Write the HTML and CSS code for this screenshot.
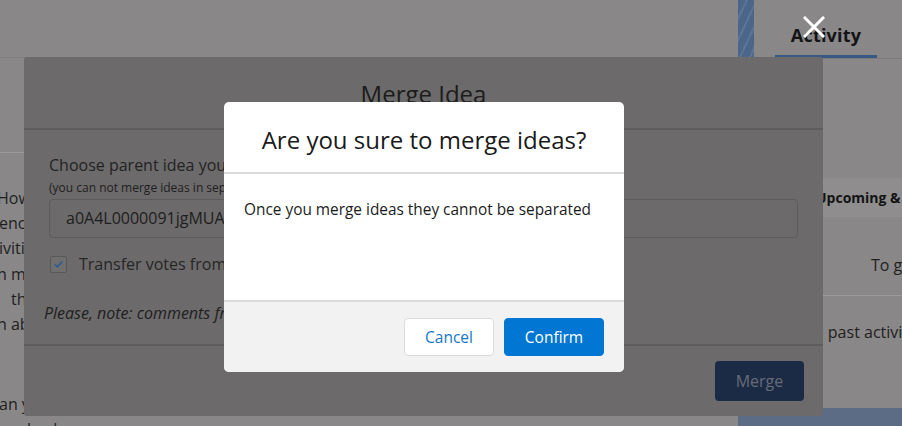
FILE: index.html
```html
<!DOCTYPE html>
<html>
<head>
<meta charset="utf-8">
<link rel="stylesheet" href="styles.css">
</head>
<body>
<div class="page">
  <div class="main">
    <div class="main-top"></div>
    <div class="main-sub"></div>
    <div class="main-text">
      <div class="ln">How to</div>
      <div class="ln s1">ences</div>
      <div class="ln s1">ivities</div>
      <div class="ln">n make</div>
      <div class="ln s2">the</div>
      <div class="ln">n about</div>
      <div class="ln gap s1">an you</div>
      <div class="ln s3">back</div>
    </div>
  </div>
  <div class="strip">
    <div class="strip-top"></div>
    <div class="strip-mid"></div>
    <div class="strip-foot"></div>
  </div>
  <aside class="side">
    <div class="tabs"><div class="tab">Activity</div></div>
    <div class="side-space"></div>
    <div class="side-band">Upcoming &amp; Overdue</div>
    <div class="side-row">To get started</div>
    <div class="side-row2">No past activity</div>
    <div class="side-fill"></div>
    <div class="side-foot"></div>
  </aside>
</div>

<svg class="close" width="22" height="22" viewBox="0 0 22 22">
  <path d="M2 2 L20 20 M20 2 L2 20" stroke="#ffffff" stroke-width="3" stroke-linecap="square" fill="none"/>
</svg>

<div class="merge">
  <div class="merge-head">Merge Idea</div>
  <div class="merge-body">
    <div class="m-label">Choose parent idea you want to merge into</div>
    <div class="m-hint">(you can not merge ideas in separate zones)</div>
    <div class="m-input">a0A4L0000091jgMUAQ</div>
    <div class="m-check">
      <span class="box"><svg width="16" height="16" viewBox="0 0 16 16"><path d="M4 8.3 L6.8 11 L12 5.3" stroke="#2a5c96" stroke-width="1.8" fill="none"/></svg></span>
      <span>Transfer votes from the child idea</span>
    </div>
    <div class="m-note">Please, note: comments from the child idea will be transferred</div>
  </div>
  <div class="merge-foot"><button class="btn-merge">Merge</button></div>
</div>

<div class="confirm">
  <div class="c-head">Are you sure to merge ideas?</div>
  <div class="c-body">Once you merge ideas they cannot be separated</div>
  <div class="c-foot">
    <button class="btn btn-cancel">Cancel</button>
    <button class="btn btn-confirm">Confirm</button>
  </div>
</div>
</body>
</html>
```

FILE: styles.css
```css
* { box-sizing: border-box; }
html, body {
  margin: 0;
  padding: 0;
  width: 902px;
  height: 426px;
  overflow: hidden;
  background: #898788;
  font-family: "Open Sans", "Noto Sans", sans-serif;
}
.page {
  display: flex;
  width: 902px;
  height: 426px;
}
.main {
  width: 738px;
  display: flex;
  flex-direction: column;
  overflow: hidden;
}
.main-top { height: 57px; flex-shrink: 0; }
.main-sub {
  height: 96px;
  flex-shrink: 0;
  border-top: 1px solid #7f7d7e;
  border-bottom: 1px solid #9b999a;
}
.main-text {
  flex-shrink: 0;
  padding-top: 33px;
  margin-left: -3px;
  font-size: 16px;
  line-height: 25.2px;
  color: #1f1f1f;
  white-space: nowrap;
}
.ln.s1 { padding-left: 2px; }
.ln.s2 { padding-left: 14px; }
.ln.s3 { padding-left: 30px; }
.ln.gap { margin-top: 55px; }
.strip {
  width: 16px;
  display: flex;
  flex-direction: column;
}
.strip-top {
  height: 57px;
  flex-shrink: 0;
  background: repeating-linear-gradient(115deg, #4b6688 0 7px, #5a7597 7px 9px);
}
.strip-mid { flex: 1; }
.strip-foot { height: 18px; flex-shrink: 0; background: #5c6c84; }
.side {
  width: 148px;
  display: flex;
  flex-direction: column;
  white-space: nowrap;
  overflow: hidden;
}
.tabs {
  height: 59px;
  flex-shrink: 0;
  border-bottom: 1px solid #7d7b7c;
  padding-left: 21px;
  display: flex;
  align-items: flex-end;
}
.tab {
  width: 102px;
  height: 58px;
  border-bottom: 3px solid #375984;
  font-weight: 700;
  font-size: 18px;
  color: #141414;
  text-align: center;
  padding-top: 23px;
  letter-spacing: 0.2px;
}
.side-space { height: 119px; flex-shrink: 0; }
.side-band {
  height: 39px;
  flex-shrink: 0;
  background: #8f8d8e;
  font-weight: 700;
  font-size: 14px;
  line-height: 39px;
  color: #141414;
  padding-left: 62px;
}
.side-row {
  height: 79px;
  flex-shrink: 0;
  border-bottom: 1px solid #9c9a9b;
  font-size: 16px;
  line-height: 20px;
  padding-top: 38px;
  padding-left: 117px;
  color: #1f1f1f;
}
.side-row2 {
  flex-shrink: 0;
  font-size: 16px;
  line-height: 20px;
  padding-top: 26px;
  padding-left: 48px;
  color: #1f1f1f;
}
.side-fill { flex: 1; }
.side-foot { height: 18px; flex-shrink: 0; background: #5c6c84; }

.close {
  position: absolute;
  left: 803px;
  top: 16px;
  z-index: 5;
}

/* Merge Idea modal (dimmed) */
.merge {
  position: absolute;
  z-index: 10;
  left: 24px;
  top: 57px;
  width: 799px;
  height: 359px;
  background: #6c6a6b;
  border-radius: 3px;
  display: flex;
  flex-direction: column;
  color: #1e1e1e;
  white-space: nowrap;
}
.merge-head {
  height: 73px;
  flex-shrink: 0;
  border-bottom: 2px solid #5e5d5e;
  font-size: 24px;
  text-align: center;
  padding-top: 20px;
  color: #1c1c1c;
}
.merge-body {
  flex: 1;
  padding: 24px 25px 0 25px;
  border-bottom: 2px solid #5e5d5e;
}
.m-label {
  font-size: 16px;
  line-height: 22px;
  color: #232323;
}
.m-hint {
  font-size: 12px;
  line-height: 16px;
  margin-top: 4px;
  color: #1e1e1e;
}
.m-input {
  margin-top: 3px;
  height: 39px;
  border: 1px solid #5d5c5d;
  border-radius: 4px;
  font-size: 16px;
  line-height: 37px;
  padding-left: 16px;
  color: #1e1e1e;
}
.m-check {
  display: flex;
  align-items: center;
  gap: 12px;
  margin-top: 15px;
  font-size: 16px;
  color: #262626;
}
.box {
  width: 17px;
  height: 17px;
  border: 1px solid #5a595a;
  border-radius: 2px;
  background: #706e6f;
  display: flex;
  align-items: center;
  justify-content: center;
  margin-left: 1px;
}
.m-note {
  margin-top: 27px;
  margin-left: -5px;
  font-style: italic;
  font-size: 16px;
  color: #202020;
}
.merge-foot {
  height: 70px;
  flex-shrink: 0;
  display: flex;
  justify-content: flex-end;
  align-items: flex-start;
  padding: 15px 19px 0 0;
}
.btn-merge {
  width: 89px;
  height: 40px;
  border: none;
  border-radius: 4px;
  background: #1b2a45;
  color: #676c78;
  font-family: inherit;
  font-size: 16px;
}

/* Confirm dialog */
.confirm {
  position: absolute;
  z-index: 20;
  left: 224px;
  top: 102px;
  width: 400px;
  height: 270px;
  background: #ffffff;
  border-radius: 5px;
  display: flex;
  flex-direction: column;
  overflow: hidden;
}
.c-head {
  height: 72px;
  flex-shrink: 0;
  border-bottom: 2px solid #dcdbdb;
  font-size: 24px;
  text-align: center;
  padding-top: 21px;
  color: #1a1a1a;
}
.c-body {
  height: 126px;
  flex-shrink: 0;
  padding: 25px 20px 0 20px;
  font-size: 15.4px;
  color: #1c1c1c;
}
.c-foot {
  flex: 1;
  background: #f3f2f2;
  border-top: 2px solid #dcdbdb;
  display: flex;
  justify-content: flex-end;
  align-items: flex-start;
  gap: 10px;
  padding: 16px 20px 0 0;
}
.btn {
  height: 38px;
  border-radius: 4px;
  font-family: inherit;
  font-size: 15.5px;
}
.btn-cancel {
  width: 90px;
  background: #ffffff;
  border: 1px solid #dddbda;
  color: #1878c4;
}
.btn-confirm {
  width: 100px;
  background: #0176d3;
  border: 1px solid #0176d3;
  color: #ffffff;
}
```
